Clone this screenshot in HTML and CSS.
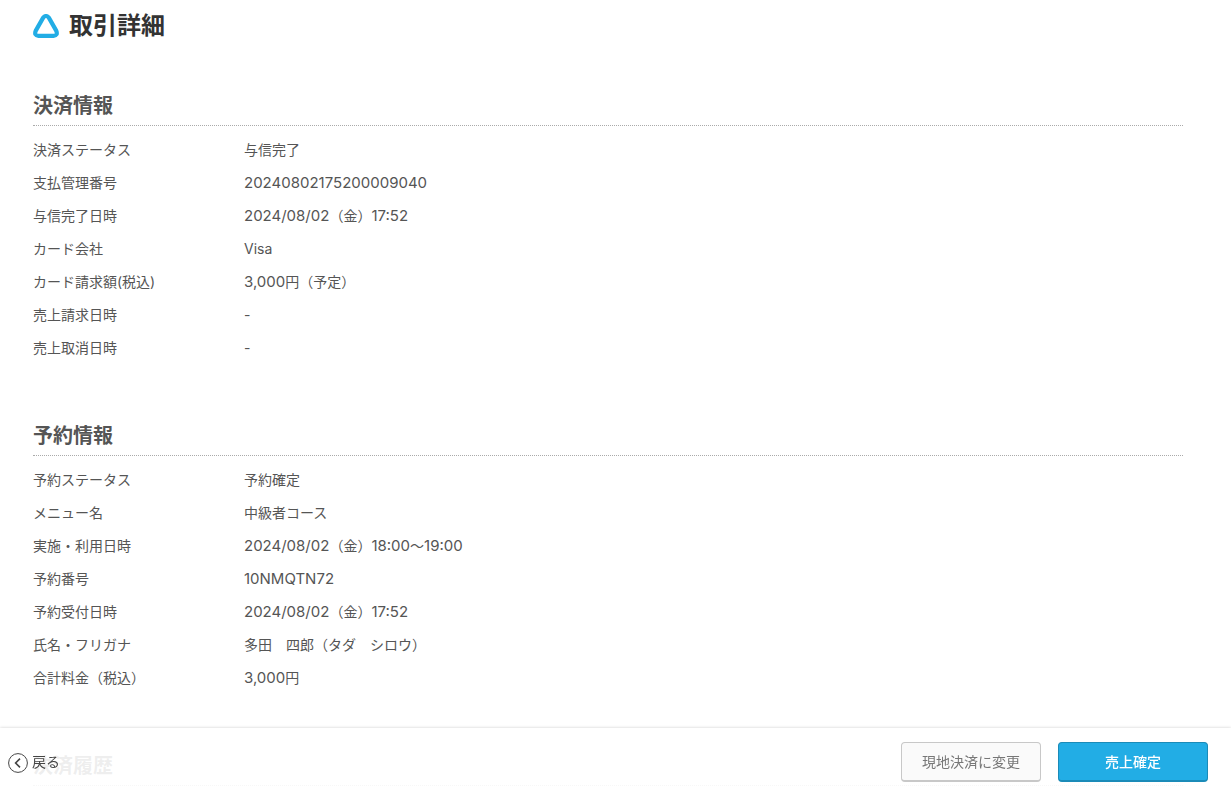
FILE: index.html
```
<!DOCTYPE html>
<html lang="ja">
<head>
<meta charset="utf-8">
<title>取引詳細</title>
<link rel="stylesheet" href="styles.css">
</head>
<body>
<main class="page">
  <h1 class="page-title">
    <svg class="logo" viewBox="0 0 26 24" aria-hidden="true"><path d="M10.2 3.6Q13 0.4 15.8 3.6L23.2 16.6Q25.2 21.6 20.6 21.8H5.4Q0.8 21.6 2.8 16.6Z" fill="none" stroke="#22ade5" stroke-width="4.2" stroke-linejoin="round"/></svg>
    <span>取引詳細</span>
  </h1>

  <section class="section">
    <h2 class="section-title">決済情報</h2>
    <dl class="details">
      <dt>決済ステータス</dt><dd>与信完了</dd>
      <dt>支払管理番号</dt><dd><span class="num">20240802175200009040</span></dd>
      <dt>与信完了日時</dt><dd><span class="num">2024/08/02</span>（金）<span class="num">17:52</span></dd>
      <dt>カード会社</dt><dd>Visa</dd>
      <dt>カード請求額(税込)</dt><dd><span class="num">3,000</span>円（予定）</dd>
      <dt>売上請求日時</dt><dd>-</dd>
      <dt>売上取消日時</dt><dd>-</dd>
    </dl>
  </section>

  <section class="section">
    <h2 class="section-title">予約情報</h2>
    <dl class="details">
      <dt>予約ステータス</dt><dd>予約確定</dd>
      <dt>メニュー名</dt><dd>中級者コース</dd>
      <dt>実施・利用日時</dt><dd><span class="num">2024/08/02</span>（金）<span class="num">18:00</span>〜<span class="num">19:00</span></dd>
      <dt>予約番号</dt><dd><span class="num">10NMQTN72</span></dd>
      <dt>予約受付日時</dt><dd><span class="num">2024/08/02</span>（金）<span class="num">17:52</span></dd>
      <dt>氏名・フリガナ</dt><dd>多田　四郎（タダ　シロウ）</dd>
      <dt>合計料金（税込）</dt><dd><span class="num">3,000</span>円</dd>
    </dl>
  </section>

  <section>
    <h2 class="section-title">決済履歴</h2>
  </section>
</main>

<footer class="action-bar">
  <a class="back" href="#">
    <svg class="back-icon" viewBox="0 0 20 20" aria-hidden="true"><circle cx="10" cy="10" r="9.4"/><path d="M12 5.6L7.6 10L12 14.4" stroke-width="1.6"/></svg>
    <span>戻る</span>
  </a>
  <div class="actions">
    <button type="button" class="button">現地決済に変更</button>
    <button type="button" class="button button-primary">売上確定</button>
  </div>
</footer>
</body>
</html>
```
FILE: styles.css
```
* {
  box-sizing: border-box;
}

body {
  margin: 0;
  background: #fff;
  color: #555;
  font-family: Inter, "Noto Sans CJK JP", sans-serif;
  font-size: 14px;
  line-height: 33px;
}

h1, h2, dl, dd {
  margin: 0;
}

.page {
  padding: 8px 48px 0 33px;
}

.page-title {
  display: flex;
  align-items: center;
  gap: 10px;
  margin-bottom: 47px;
  color: #333;
  font-size: 24px;
  line-height: 36px;
}

.logo {
  width: 26px;
  height: 24px;
}

.section {
  margin-bottom: 57px;
}

.section-title {
  padding-bottom: 4px;
  border-bottom: 1px dotted #aaa;
  font-size: 20px;
  line-height: 30px;
}

.details {
  display: grid;
  grid-template-columns: 211px 1fr;
  padding-top: 7px;
}

.details dt,
.details dd {
  height: 33px;
}

.num {
  font-size: 15px;
}

.action-bar {
  position: fixed;
  right: 0;
  bottom: 0;
  left: 0;
  display: flex;
  align-items: flex-start;
  justify-content: space-between;
  height: 70px;
  padding: 14px 23px 0 8px;
  background: rgba(255, 255, 255, 0.9);
  box-shadow: 0 0 3px rgba(0, 0, 0, 0.2);
}

.back {
  display: flex;
  align-items: center;
  gap: 4px;
  height: 38px;
  color: #444;
  text-decoration: none;
}

.back-icon {
  width: 20px;
  height: 20px;
  margin-top: 4px;
  fill: none;
  stroke: #444;
  stroke-width: 1;
}

.actions {
  display: flex;
  gap: 17px;
}

.button {
  width: 140px;
  height: 40px;
  padding: 0;
  border: 1px solid #c8c8c8;
  border-bottom-width: 2px;
  border-radius: 4px;
  background: #fafafa;
  color: #777;
  font: inherit;
  line-height: 36px;
  cursor: pointer;
}

.button-primary {
  width: 150px;
  border-color: #1b8bb8;
  background: #22ade5;
  color: #fff;
  font-weight: 500;
}
```
